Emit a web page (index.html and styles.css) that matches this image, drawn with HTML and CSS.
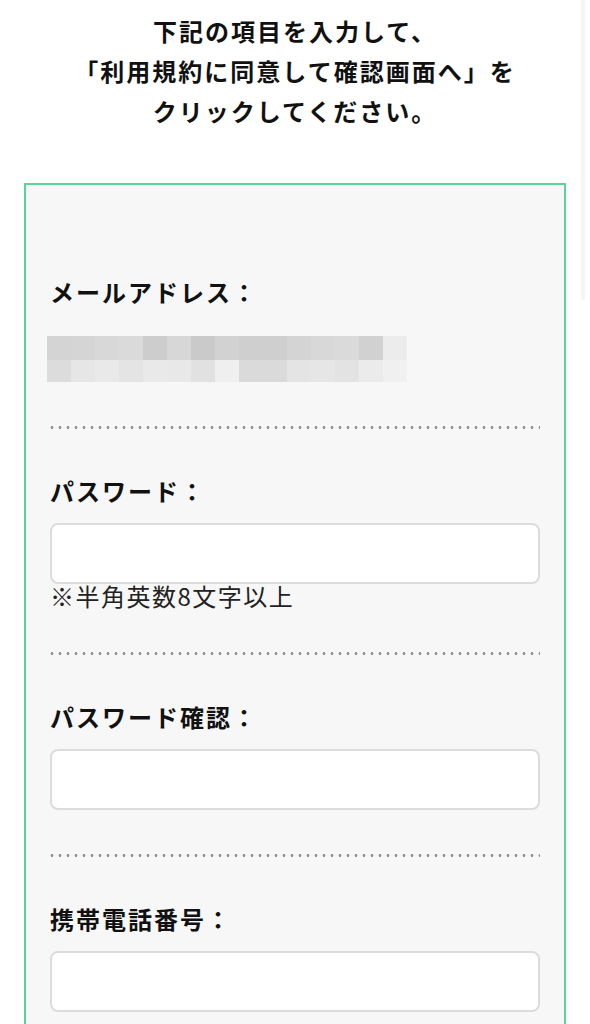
FILE: index.html
```html
<!DOCTYPE html>
<html lang="ja">
<head>
<meta charset="utf-8">
<title>会員登録</title>
<link rel="stylesheet" href="styles.css">
</head>
<body>
<h1 class="lead">下記の項目を入力して、<br>「利用規約に同意して確認画面へ」を<br>クリックしてください。</h1>

<form class="panel">
  <div class="field">
    <div class="label">メールアドレス：</div>
    <svg class="mosaic" width="360" height="46" viewBox="0 0 360 46" aria-label="メールアドレス（伏せ字）">
      <g>
        <rect x="0" y="0" width="24" height="24" fill="#d4d4d4"/>
        <rect x="24" y="0" width="24" height="24" fill="#d5d5d5"/>
        <rect x="48" y="0" width="24" height="24" fill="#d8d8d8"/>
        <rect x="72" y="0" width="24" height="24" fill="#dadada"/>
        <rect x="96" y="0" width="24" height="24" fill="#cdcdcd"/>
        <rect x="120" y="0" width="24" height="24" fill="#d7d7d7"/>
        <rect x="144" y="0" width="24" height="24" fill="#cacaca"/>
        <rect x="168" y="0" width="24" height="24" fill="#d2d2d2"/>
        <rect x="192" y="0" width="24" height="24" fill="#cfcfcf"/>
        <rect x="216" y="0" width="24" height="24" fill="#cfcfcf"/>
        <rect x="240" y="0" width="24" height="24" fill="#d4d4d4"/>
        <rect x="264" y="0" width="24" height="24" fill="#d8d8d8"/>
        <rect x="288" y="0" width="24" height="24" fill="#dadada"/>
        <rect x="312" y="0" width="24" height="24" fill="#d1d1d1"/>
        <rect x="336" y="0" width="24" height="24" fill="#ececec"/>
      </g>
      <g>
        <rect x="0" y="24" width="24" height="22" fill="#dcdcdc"/>
        <rect x="24" y="24" width="24" height="22" fill="#e6e6e6"/>
        <rect x="48" y="24" width="24" height="22" fill="#e9e9e9"/>
        <rect x="72" y="24" width="24" height="22" fill="#e4e4e4"/>
        <rect x="96" y="24" width="24" height="22" fill="#e9e9e9"/>
        <rect x="120" y="24" width="24" height="22" fill="#e8e8e8"/>
        <rect x="144" y="24" width="24" height="22" fill="#e1e1e1"/>
        <rect x="168" y="24" width="24" height="22" fill="#efefef"/>
        <rect x="192" y="24" width="24" height="22" fill="#dadada"/>
        <rect x="216" y="24" width="24" height="22" fill="#dadada"/>
        <rect x="240" y="24" width="24" height="22" fill="#e4e4e4"/>
        <rect x="264" y="24" width="24" height="22" fill="#e6e6e6"/>
        <rect x="288" y="24" width="24" height="22" fill="#e3e3e3"/>
        <rect x="312" y="24" width="24" height="22" fill="#ebebeb"/>
        <rect x="336" y="24" width="24" height="22" fill="#f0f0f0"/>
      </g>
    </svg>
  </div>
  <div class="sep"></div>
  <div class="field">
    <label class="label" for="pw">パスワード：</label>
    <input class="input" id="pw" type="password">
    <p class="note">※半角英数8文字以上</p>
  </div>
  <div class="sep"></div>
  <div class="field">
    <label class="label" for="pw2">パスワード確認：</label>
    <input class="input" id="pw2" type="password">
  </div>
  <div class="sep"></div>
  <div class="field">
    <label class="label" for="tel">携帯電話番号：</label>
    <input class="input" id="tel" type="tel">
  </div>
</form>

<div class="scrollbar"></div>
</body>
</html>
```
FILE: styles.css
```css
html, body {
  margin: 0;
  padding: 0;
  background: #ffffff;
}

body {
  font-family: "Noto Sans CJK JP", "Noto Sans", sans-serif;
  color: #111111;
  width: 590px;
}

.lead {
  margin: 0;
  padding-top: 11px;
  font-size: 24px;
  font-weight: 700;
  line-height: 40px;
  letter-spacing: 2px;
  text-align: center;
  color: #111111;
}

.panel {
  margin: 52px 24px 0;
  border: 2px solid #55d597;
  background: #f7f7f7;
  padding: 45px 24px 0;
}

.field {
  display: flex;
  flex-direction: column;
  align-items: stretch;
  padding: 44px 0;
}

.label {
  display: block;
  font-size: 24px;
  font-weight: 700;
  line-height: 36px;
  letter-spacing: 2px;
  color: #111111;
}

.mosaic {
  display: block;
  margin-top: 26px;
  margin-left: -3px;
}

.input {
  box-sizing: border-box;
  display: block;
  width: 100%;
  height: 61px;
  margin: 14px 0 0;
  border: 2px solid #dcdcdc;
  border-radius: 8px;
  background: #ffffff;
  font-size: 24px;
  outline: none;
}

.note {
  margin: 0;
  font-size: 24px;
  font-weight: 400;
  line-height: 24px;
  letter-spacing: 1.5px;
  color: #222222;
}

.sep {
  height: 3px;
  background-image: radial-gradient(circle at center, #959595 1.2px, rgba(149, 149, 149, 0) 1.7px);
  background-size: 8px 3px;
  background-position: -2px 0;
  background-repeat: repeat-x;
}

.scrollbar {
  position: fixed;
  top: 0;
  left: 581px;
  width: 4px;
  height: 300px;
  background: #f6f6f6;
}
```
